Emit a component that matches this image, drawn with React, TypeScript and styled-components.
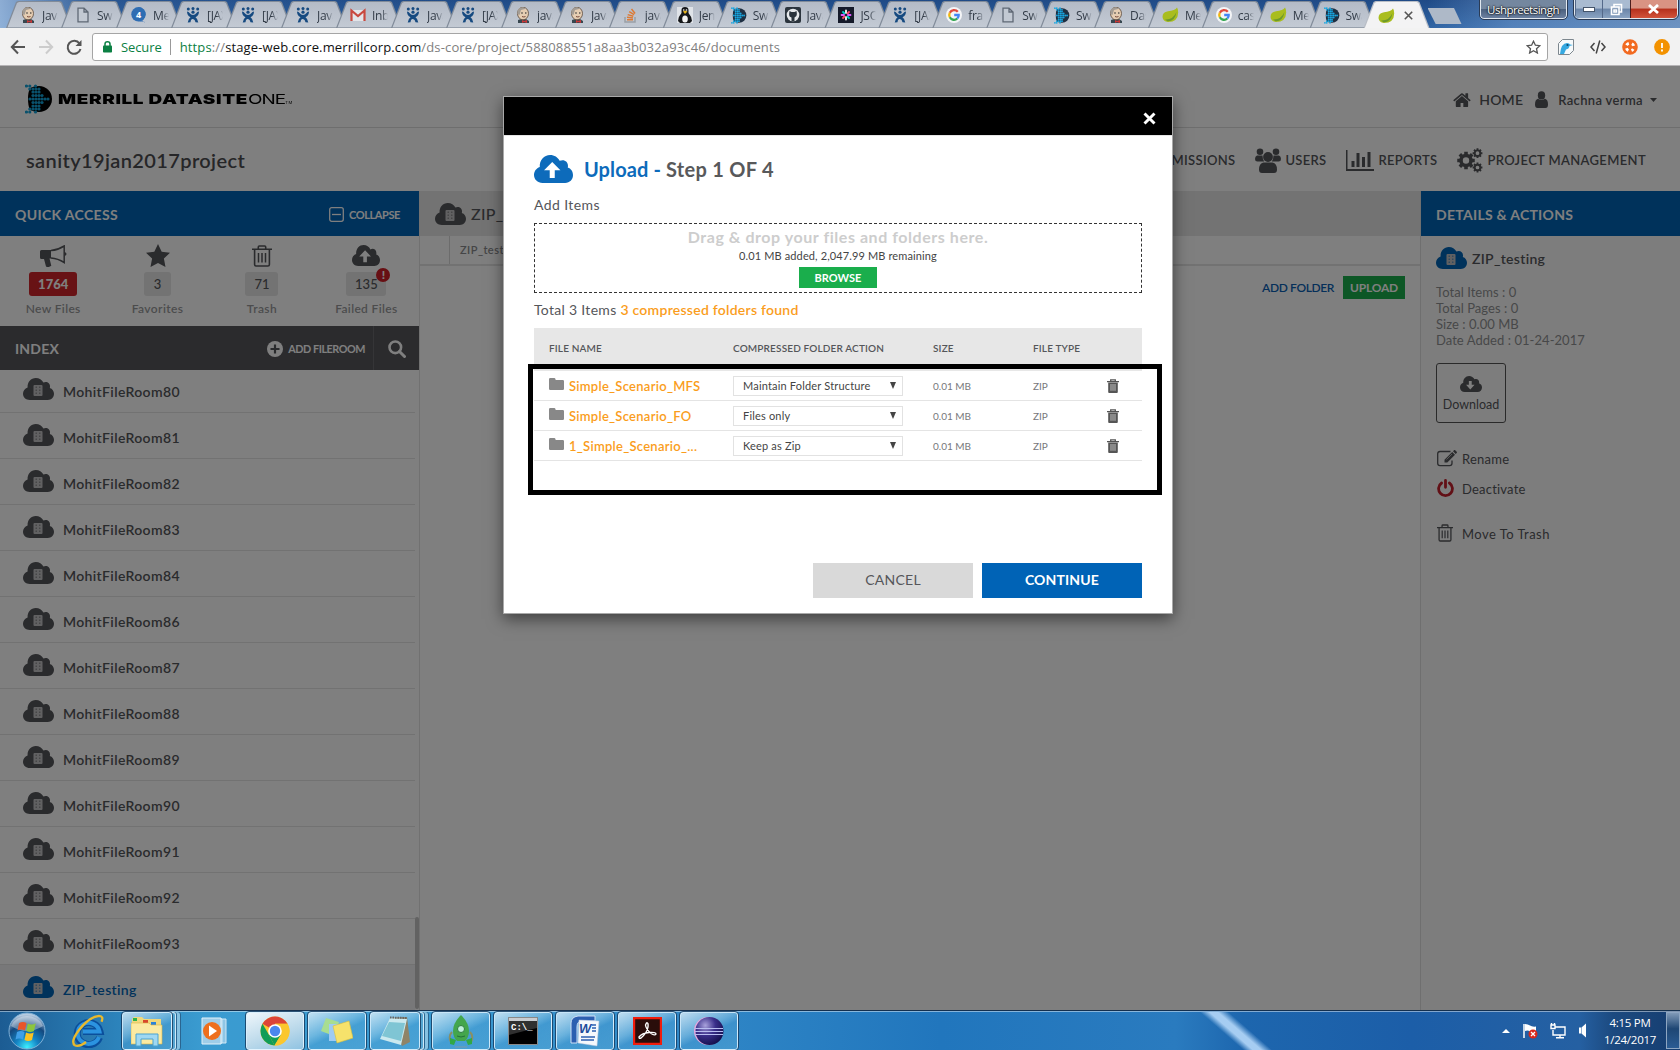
import React from "react";
import styled, { createGlobalStyle, css } from "styled-components";

const Global = createGlobalStyle`
  * { box-sizing: border-box; }
  html, body { margin: 0; padding: 0; overflow: hidden; background: #fff; }
  svg { display: block; flex: none; }
`;

const BRAND = `Lato, "Open Sans", sans-serif`;
const SYSTEM = `"Open Sans", "Noto Sans", sans-serif`;

type TypeProps = { $size?: number; $weight?: number; $color?: string; $track?: number };
const type = css<TypeProps>`
  font-size: ${(p) => p.$size ?? 14}px;
  font-weight: ${(p) => p.$weight ?? 400};
  color: ${(p) => p.$color ?? "#55565a"};
  letter-spacing: ${(p) => p.$track ?? 0}px;
  white-space: nowrap;
`;
const Label = styled.span<TypeProps>`
  ${type}
`;

const Screen = styled.div`
  width: 1680px;
  height: 1050px;
  display: flex;
  flex-direction: column;
  overflow: hidden;
  font-family: ${BRAND};
`;

/* ---------- browser chrome ---------- */

const TabStrip = styled.div`
  height: 28px;
  display: flex;
  padding: 1px 0 0 6px;
  background: linear-gradient(90deg, rgba(160, 190, 225, 0.85), rgba(60, 110, 170, 0.3) 6%, rgba(30, 75, 135, 0) 30%, rgba(20, 60, 120, 0) 85%, rgba(120, 160, 210, 0.5) 90%, rgba(170, 195, 225, 0.5)),
    linear-gradient(180deg, #1f4a86, #2f64a4);
`;
const TabShape = styled.div<{ $active?: boolean; $overlap?: number }>`
  width: 66px;
  height: 27px;
  margin-right: -${(p) => p.$overlap ?? 12}px;
  flex: none;
  clip-path: polygon(0 100%, 10px 1px, 12px 0, 54px 0, 56px 1px, 100% 100%);
  background: ${(p) => (p.$active ? "#b9bec6" : "#818b99")};
`;
const TabFace = styled.div<{ $active?: boolean }>`
  height: 27px;
  display: flex;
  align-items: center;
  padding: 2px 0 0 14px;
  clip-path: polygon(1.3px 100%, 11px 2px, 13px 1px, 53px 1px, 55px 2px, calc(100% - 1.3px) 100%);
  background: ${(p) => (p.$active ? "#f3f3f4" : "linear-gradient(180deg, #b3bac6, #c3cad4)")};
  border-bottom: ${(p) => (p.$active ? "none" : "1px solid #98a1ad")};
`;
const TabTitle = styled.span`
  width: 16px;
  margin-left: 6px;
  overflow: hidden;
  white-space: nowrap;
  font: 12px ${SYSTEM};
  letter-spacing: -0.3px;
  color: #333c48;
  -webkit-mask-image: linear-gradient(90deg, #000 60%, transparent);
  mask-image: linear-gradient(90deg, #000 60%, transparent);
`;
const NewTab = styled.div`
  width: 34px;
  height: 16px;
  margin: 7px 0 0 10px;
  flex: none;
  clip-path: polygon(0 0, 78% 0, 100% 100%, 24% 100%);
  background: #aeb9c8;
`;
const UserButton = styled.div`
  width: 87px;
  height: 19px;
  margin: -1px 0 0 18px;
  display: flex;
  align-items: center;
  justify-content: center;
  border: 1px solid #e1e8f0;
  outline: 1px solid #2a3b55;
  border-top: 0;
  border-radius: 0 0 4px 4px;
  background: linear-gradient(180deg, #74879f 0 48%, #4a5f7c 50%, #6b80a0);
  font: 11.5px ${SYSTEM};
  letter-spacing: -0.5px;
  color: #fff;
  text-shadow: 0 0 2px #000, 0 0 2px #000;
`;
const WindowButtons = styled.div`
  display: flex;
  height: 19px;
  margin: -1px 0 0 7px;
  border: 1px solid #e1e8f0;
  outline: 1px solid #2a3b55;
  border-top: 0;
  border-radius: 0 0 5px 5px;
  overflow: hidden;
`;
const WindowButton = styled.div<{ $close?: boolean }>`
  width: ${(p) => (p.$close ? 47 : 27.5)}px;
  display: flex;
  align-items: center;
  justify-content: center;
  border-left: 1px solid ${(p) => (p.$close ? "#4b1d1d" : "#54698a")};
  background: ${(p) => (p.$close ? "linear-gradient(180deg,#d99383 0 45%,#b5301c 50%,#d2533b)" : "linear-gradient(180deg,#a9bbd1 0 45%,#6b85a8 50%,#8aa3c2)")};
`;

const Toolbar = styled.div`
  height: 38px;
  display: flex;
  align-items: center;
  padding-left: 10px;
  background: #f2f2f2;
  border-bottom: 1px solid #b6b4b6;
`;
const Omnibox = styled.div`
  width: 1456px;
  height: 28px;
  margin: 0 0 0 10px;
  padding: 0 6px 0 10px;
  display: flex;
  align-items: center;
  background: #fff;
  border: 1px solid #a5a5a5;
  border-radius: 3px;
  font-family: ${SYSTEM};
`;
const OmniDivider = styled.i`
  width: 1px;
  height: 16px;
  margin: 0 8.5px;
  background: #999;
`;
const Url = styled.span`
  font-size: 13px;
  letter-spacing: 0.14px;
  color: #808080;
  flex: 1;
  white-space: nowrap;
  b { font-weight: 400; color: #111; }
  em { font-style: normal; color: #0b8043; }
`;
const Extensions = styled.div`
  display: flex;
  gap: 16px;
  margin-left: 10px;
`;

/* ---------- application ---------- */

const Page = styled.div`
  position: relative;
  height: 944px;
  display: flex;
  flex-direction: column;
  background: #fff;
`;
const BrandBar = styled.div`
  height: 62px;
  display: flex;
  align-items: center;
  padding: 4px 23px 0 25px;
  border-bottom: 1px solid #dcdcdc;
`;
const AccountLinks = styled.div`
  display: flex;
  align-items: center;
  padding-top: 2px;
`;
const Wordmark = styled.div`
  width: 236px;
  margin: 1px 0 0 5px;
  color: #000;
  font: 900 13.5px Inter, sans-serif;
  letter-spacing: 0.45px;
  white-space: nowrap;
  transform: scaleX(1.4);
  transform-origin: 0 50%;
  span { font-weight: 400; letter-spacing: -0.7px; }
  small { font-size: 3px; font-weight: 400; }
`;
const Spacer = styled.div`
  flex: 1;
`;
const ProjectBar = styled.div`
  height: 63px;
  display: flex;
  align-items: center;
  padding: 1px 34px 0 26px;
`;
const NavItem = styled.div<{ $gap: number }>`
  display: flex;
  align-items: center;
  gap: 4px;
  margin-left: ${(p) => p.$gap}px;
`;
const Columns = styled.div`
  flex: 1;
  display: flex;
  min-height: 0;
`;
const Sidebar = styled.aside`
  width: 420px;
  display: flex;
  flex-direction: column;
  border-right: 1px solid #e2e2e2;
`;
const PanelTitle = styled.div<{ $dark?: boolean }>`
  height: ${(p) => (p.$dark ? 44 : 45)}px;
  flex: none;
  display: flex;
  align-items: center;
  padding: ${(p) => (p.$dark ? 1 : 2)}px 0 0 15px;
  background: ${(p) => (p.$dark ? "#56565a" : "#0064b6")};
`;
const QuickRow = styled.div`
  height: 90px;
  flex: none;
  display: grid;
  grid-template-columns: repeat(4, 104.4px);
  padding-left: 1px;
`;
const QuickItem = styled.div`
  display: flex;
  flex-direction: column;
  align-items: center;
  padding-top: 8px;
`;
const QuickIcon = styled.div`
  height: 23px;
  display: flex;
  align-items: center;
`;
const CountBadge = styled.div<{ $alert?: boolean; $w: number }>`
  position: relative;
  width: ${(p) => p.$w}px;
  height: 24px;
  margin: 5px 0 5px;
  display: flex;
  align-items: center;
  justify-content: center;
  border-radius: 3px;
  background: ${(p) => (p.$alert ? "#d0242a" : "#e6e6e6")};
`;
const AlertDot = styled.div`
  position: absolute;
  right: -4px;
  top: -4px;
  width: 14px;
  height: 14px;
  border-radius: 50%;
  background: #cf1f27;
  color: #fff;
  font: 900 12px/14px ${BRAND};
  text-align: center;
`;
const SearchCell = styled.div`
  height: 44px;
  margin: -1px 0 0 8px;
  padding-top: 1px;
  width: 46px;
  display: flex;
  align-items: center;
  justify-content: center;
  border-left: 1px solid #6a6a6e;
`;
const RoomList = styled.div`
  position: relative;
  flex: 1;
  overflow: hidden;
`;
const Room = styled.div<{ $selected?: boolean }>`
  width: 415px;
  height: 46px;
  display: flex;
  align-items: flex-start;
  gap: 9px;
  padding: 11px 0 0 23px;
  border-bottom: 1px solid #e4e4e4;
  background: ${(p) => (p.$selected ? "#f1f1f2" : "#fff")};
  &:first-child { margin-top: -3px; }
`;
const RoomName = styled.span<TypeProps>`
  ${type}
  line-height: 18px;
  margin-top: 5px;
`;
const ScrollThumb = styled.div`
  position: absolute;
  right: 0;
  bottom: 1px;
  width: 4px;
  height: 92px;
  border-radius: 2px;
  background: #c4c4c4;
`;
const Main = styled.main`
  width: 1001px;
  display: flex;
  flex-direction: column;
  border-right: 1px solid #dedede;
`;
const MainTitle = styled.div`
  height: 45px;
  display: flex;
  align-items: center;
  gap: 5px;
  padding: 0 0 0 15px;
  background: #e6e6e6;
`;
const Crumbs = styled.div`
  height: 30px;
  display: flex;
  align-items: stretch;
  border-bottom: 2px solid #e4e4e4;
`;
const CrumbHome = styled.div`
  width: 30px;
  border-right: 1px solid #d8d8d8;
`;
const Crumb = styled.div<TypeProps>`
  ${type}
  padding-left: 10px;
  line-height: 28px;
`;
const MainActions = styled.div`
  display: flex;
  justify-content: flex-end;
  align-items: center;
  gap: 9px;
  padding: 10px 15px 0 0;
`;
const UploadButton = styled.div`
  width: 62px;
  height: 23px;
  display: flex;
  align-items: center;
  justify-content: center;
  background: #1aae4c;
`;
const Details = styled.aside`
  flex: 1;
  display: flex;
  flex-direction: column;
  background: #fbfbfb;
`;
const DetailsHead = styled.div`
  display: flex;
  align-items: center;
  gap: 5px;
  padding: 11px 0 0 15px;
`;
const Facts = styled.div<TypeProps>`
  ${type}
  padding: 15px 0 0 15px;
  line-height: 16px;
`;
const DownloadBox = styled.div`
  width: 70px;
  height: 60px;
  margin: 15px 0 0 15px;
  display: flex;
  flex-direction: column;
  align-items: center;
  padding-top: 12px;
  gap: 5px;
  border: 1px solid #555;
  border-radius: 3px;
`;
const ActionRow = styled.div<{ $top: number }>`
  height: 20px;
  margin-top: ${(p) => p.$top}px;
  padding-left: 16px;
  display: grid;
  grid-template-columns: 25px auto;
  align-items: center;
  svg { margin-bottom: 2px; }
`;

/* ---------- upload dialog ---------- */

const Backdrop = styled.div`
  position: absolute;
  inset: 0;
  background: rgba(0, 0, 0, 0.5);
`;
const Dialog = styled.div`
  position: absolute;
  left: 503px;
  top: 30px;
  width: 670px;
  height: 518px;
  display: flex;
  flex-direction: column;
  background: #fff;
  border: 1px solid #a9a9a9;
  box-shadow: 0 5px 15px rgba(0, 0, 0, 0.5);
`;
const DialogBar = styled.div`
  height: 39px;
  flex: none;
  display: flex;
  align-items: center;
  justify-content: flex-end;
  padding: 4px 16px 0 0;
  background: #000;
  border-bottom: 1px solid #e5e5e5;
`;
const DialogBody = styled.div`
  flex: 1;
  display: flex;
  flex-direction: column;
  padding: 17px 30px 15px;
`;
const DialogTitle = styled.div`
  height: 31px;
  display: flex;
  align-items: center;
  gap: 11px;
`;
const DropZone = styled.div`
  height: 70px;
  margin-top: -3px;
  display: flex;
  flex-direction: column;
  align-items: center;
  border: 1px dashed #333;
`;
const BrowseButton = styled.div`
  width: 78px;
  height: 21px;
  margin-top: 5px;
  display: flex;
  align-items: center;
  justify-content: center;
  background: #1aae4c;
`;
const Line = styled.div<TypeProps & { $h: number }>`
  ${type}
  height: ${(p) => p.$h}px;
  line-height: ${(p) => p.$h}px;
`;
const Totals = styled(Line)`
  line-height: 33px;
`;
const gridColumns = css`
  display: grid;
  grid-template-columns: 184px 200px 100px 74px 50px;
  padding-left: 15px;
`;
const TableHead = styled.div`
  ${gridColumns}
  height: 43px;
  line-height: 40px;
  background: #e7e7e7;
`;
const TableRow = styled.div`
  ${gridColumns}
  height: 30px;
  align-items: center;
  border-bottom: 1px solid #e4e4e4;
`;
const FileCell = styled.div`
  display: flex;
  align-items: center;
  gap: 5px;
  svg { margin-bottom: 4px; }
`;
const SelectBox = styled.div`
  width: 170px;
  height: 20px;
  display: flex;
  align-items: center;
  justify-content: space-between;
  padding: 0 6px 0 9px;
  border: 1px solid #e2e2e2;
`;
const Buttons = styled.div`
  display: flex;
  justify-content: flex-end;
  gap: 9px;
`;
const FooterButton = styled.div<{ $primary?: boolean }>`
  width: 160px;
  height: 35px;
  display: flex;
  align-items: center;
  justify-content: center;
  padding-bottom: 2px;
  background: ${(p) => (p.$primary ? "#0063b6" : "#d9d9d9")};
`;
const Highlight = styled.div`
  position: absolute;
  left: 24px;
  top: 267px;
  width: 634px;
  height: 131px;
  border: 5px solid #000;
`;

/* ---------- taskbar ---------- */

const Taskbar = styled.div`
  height: 40px;
  display: flex;
  align-items: stretch;
  border-top: 1px solid #14304f;
  box-shadow: inset 0 1px 0 rgba(255, 255, 255, 0.45);
  background: linear-gradient(90deg, #1c5c93 0, #2c83bb 7%, #3a9bd0 12%, #3a9bd2 25%, #2f86c6 42%, #2176bd 56%, #2a7bbf 70%, #1d66ae 74%, #1c5ea8 84%, #2560a2 94%, #1c4a80 96%, #163d70 100%);
`;
const StartCell = styled.div`
  width: 54px;
  display: flex;
  align-items: center;
  justify-content: center;
`;
const PinCell = styled.div<{ $w: number }>`
  width: ${(p) => p.$w}px;
  display: flex;
  align-items: center;
  justify-content: center;
`;
const TaskButton = styled.div<{ $w?: number; $active?: boolean; $stack?: boolean }>`
  width: ${(p) => p.$w ?? 58}px;
  height: 38px;
  margin: 1px ${(p) => (p.$stack ? 12 : 4)}px 0 0;
  display: flex;
  align-items: center;
  justify-content: center;
  border: 1px solid rgba(225, 243, 255, 0.85);
  border-radius: 3px;
  outline: 1px solid rgba(20, 55, 90, 0.8);
  background: ${(p) =>
    p.$active
      ? "linear-gradient(160deg, #eef6fb, #b9d8ea 60%, #8fc3e2)"
      : "linear-gradient(155deg, rgba(225,241,250,.8), rgba(150,205,235,.55) 40%, rgba(85,165,215,.4) 55%, rgba(90,170,215,.5))"};
  ${(p) =>
    p.$stack &&
    css`
      box-shadow: 4px 0 0 -1px #55a6d2, 4px 0 0 0 #cfe9f7, 5px 0 0 0 #2a6590, 8px 0 0 0 #86c2e2, 9px 0 0 0 #2a6590;
    `}
`;
const Streak = styled.div`
  width: 76px;
  margin: 1px 0 0 456px;
  background: linear-gradient(41deg, transparent 38%, #a6cdf2 46% 53%, transparent 62%);
`;
const Tray = styled.div`
  display: flex;
  align-items: center;
  gap: 12px;
`;
const Clock = styled.div`
  width: 62px;
  margin: 3px 5px 0 11px;
  text-align: center;
  font: 11.5px/17px ${SYSTEM};
  letter-spacing: -0.25px;
  color: #fff;
`;
const ShowDesktop = styled.div`
  width: 14px;
  margin: 1px 0 1px;
  border: 1px solid #8ea6c2;
  background: linear-gradient(180deg, #7f99b7, #1e4674 45%, #2b5c94);
`;

/* ---------- drawings ---------- */

const CLOUD =
  "M6.8 22C2.8 22 0 19.3 0 15.8 0 12.8 1.8 10.4 4.6 9.4 4.2 4 8 0 12.8 0c3.4 0 6.2 1.8 7.6 4.6C23.6 3 27.2 5 27 8.6c0 .5 0 .9-.2 1.3C29.4 10.7 31 13 31 15.8c0 3.6-2.6 6.2-6.2 6.2Z";

const RoomCloud = ({ color = "#55565a", w = 31, h = 22 }: { color?: string; w?: number; h?: number }) => (
  <svg width={w} height={h} viewBox="0 0 31 22" preserveAspectRatio="none">
    <path d={CLOUD} fill={color} />
    <rect x="10.5" y="7" width="9" height="11" rx="1" fill="#c3c3c5" />
    <path d="M13.2 8.6v8M16.800 8.600v8" stroke={color} strokeWidth="1.200" strokeDasharray="1.500 1.400" opacity=".6" />
  </svg>
);
const ArrowCloud = ({ color = "#55565a", w = 28, h = 21, down = false }: { color?: string; w?: number; h?: number; down?: boolean }) => (
  <svg width={w} height={h} viewBox="0 0 31 22" preserveAspectRatio="none">
    <path d={CLOUD} fill={color} />
    <path d={down ? "M12.500 7h4v5h4L14.500 18.500 8.500 12h4z" : "M14.500 5.500 21 12h-4.500v6h-4v-6H8z"} fill="#fff" />
  </svg>
);
const TrashOutline = ({ w = 20, h = 22, color = "#55565a" }: { w?: number; h?: number; color?: string }) => (
  <svg width={w} height={h} viewBox="0 0 20 22" fill="none" stroke={color} strokeWidth="1.600">
    <path d="M0 4.300h20M6.300 4V2q0-1 1-1h5.400q1 0 1 1v2M2.600 4.500v15q0 1.500 1.500 1.500h11.800q1.500 0 1.500-1.500v-15" />
    <path d="M6.500 8v9.500M10 8v9.500M13.500 8v9.500" strokeWidth="1.500" />
  </svg>
);
const TrashSmall = () => (
  <svg width="12" height="14" viewBox="0 0 12 14">
    <path d="M0 2.600h12M3.700 2.400V.8h4.600v1.600" fill="none" stroke="#555" strokeWidth="1.300" />
    <path d="M1.200 3.400h9.600V13q0 1-1 1H2.200q-1 0-1-1z" fill="#555" />
    <path d="M4 5v6.800M6 5v6.800M8 5v6.800" stroke="#ccc" strokeWidth=".9" />
  </svg>
);
const Folder = () => (
  <svg width="15" height="12" viewBox="0 0 15 12">
    <path d="M0 1.200Q0 0 1.200 0h4Q6.300 0 6.500 1.200L6.700 2h7.100Q15 2 15 3.200v7.600q0 1.200-1.200 1.200H1.200Q0 12 0 10.800z" fill="#888" />
  </svg>
);
const Home = () => (
  <svg width="18" height="18" viewBox="60 100 1680 1560">
    <path fill="#55565a" d="M1472 992v480q0 26-19 45t-45 19h-384v-384h-256v384h-384q-26 0-45-19t-19-45v-480q0-1 .5-3t.5-3l575-474 575 474q1 2 1 6zm223-69l-62 74q-8 9-21 11h-3q-13 0-21-7l-692-577-692 577q-12 8-24 7-13-2-21-11l-62-74q-8-10-7-23.500t11-21.500l719-599q32-26 76-26t76 26l244 204v-195q0-14 9-23t23-9h192q14 0 23 9t9 23v408l219 182q10 8 11 21.500t-7 23.500z" />
  </svg>
);
const Person = () => (
  <svg width="13" height="17" viewBox="0 0 13 17" fill="#55565a">
    <ellipse cx="6.500" cy="4.400" rx="3.700" ry="4.200" />
    <path d="M3 7.800q3.500 2.600 7 0 3 .8 3 5.700 0 3.500-2.600 3.500H2.600Q0 17 0 13.500q0-4.900 3-5.700z" />
  </svg>
);
const People = () => (
  <svg width="26" height="25" viewBox="0 0 26 25" fill="#55565a">
    <circle cx="5" cy="3.800" r="3.300" />
    <circle cx="21" cy="3.800" r="3.300" />
    <path d="M2 7.500h5.500q0 3.500 1.700 6H2.400Q0 13.500 0 11q0-3 2-3.500zM24 7.500h-5.500q0 3.500-1.700 6h6.800Q26 13.500 26 11q0-3-2-3.500z" />
    <circle cx="13" cy="9" r="4.900" />
    <path d="M8.500 14.500h9q4.500 1 4.500 7 0 3.500-3 3.500H7q-3 0-3-3.500 0-6 4.500-7z" />
  </svg>
);
const Bars = () => (
  <svg width="28" height="22" viewBox="0 0 28 22" fill="#55565a">
    <path d="M0 1h1.500v19H28v2H0zM5.500 12h3v6h-3zM10.500 4h3v14h-3zM16 8h3v10h-3zM21.500 3h3v15h-3z" />
  </svg>
);
const Gear = ({ cx, cy, r, w }: { cx: number; cy: number; r: number; w: number }) => (
  <g stroke="#55565a" fill="none">
    <circle cx={cx} cy={cy} r={r} strokeWidth={w} />
    {[0, 45, 90, 135].map((a) => (
      <path key={a} transform={`rotate(${a} ${cx} ${cy})`} d={`M${cx} ${cy - r * 1.75}V${cy - r}M${cx} ${cy + r}v${r * 0.75}`} strokeWidth={w} />
    ))}
  </g>
);
const Gears = () => (
  <svg width="26" height="25" viewBox="0 0 26 25">
    <Gear cx={9} cy={12.5} r={5} w={3.6} />
    <Gear cx={20.5} cy={5.2} r={2.8} w={1.9} />
    <Gear cx={20.5} cy={19.5} r={2.8} w={1.9} />
  </svg>
);
const Megaphone = () => (
  <svg width="27" height="22" viewBox="0 0 27 22">
    <path d="M0 6.500Q0 5 1.500 5H11v8.500H9.500l1.800 7.300Q8 23 6 21.500L4 14H1.500Q0 14 0 12.500z" fill="#55565a" />
    <path d="M11 5.600Q18 5 24.200 1v16.500Q18 13.500 11 13" fill="none" stroke="#55565a" strokeWidth="1.500" />
    <path d="M24.500 7q2 .3 2 2t-2 2z" fill="#55565a" />
  </svg>
);
const Star = () => (
  <svg width="24" height="24" viewBox="0 0 24 24">
    <path d="M12 0l3.700 7.700 8.300 1.100-6.100 5.800 1.600 8.400-7.500-4.100L4.500 23l1.600-8.400L0 8.800l8.300-1.100z" fill="#55565a" />
  </svg>
);
const Collapse = () => (
  <svg width="15" height="15" viewBox="0 0 15 15" fill="none" stroke="#fff" strokeWidth="1.300">
    <rect x=".7" y=".7" width="13.600" height="13.600" rx="2" />
    <path d="M3 7.500h9" />
  </svg>
);
const PlusCircle = () => (
  <svg width="16" height="16" viewBox="0 0 16 16">
    <circle cx="8" cy="8" r="8" fill="#fff" />
    <path d="M8 3.500v9M3.500 8h9" stroke="#55565a" strokeWidth="2.200" />
  </svg>
);
const Search = () => (
  <svg width="18" height="18" viewBox="0 0 18 18" fill="none" stroke="#fff">
    <circle cx="7.300" cy="7.300" r="5.800" strokeWidth="2.600" />
    <path d="M11.500 11.500l5 5" strokeWidth="3" strokeLinecap="round" />
  </svg>
);
const Pencil = () => (
  <svg width="20" height="17" viewBox="0 0 20 17">
    <path d="M13.500 1.500H3Q.7 1.500.7 3.800v9.500q0 2.300 2.300 2.300h9.700q2.300 0 2.300-2.300v-2.800" fill="none" stroke="#55565a" strokeWidth="1.300" />
    <path d="M7.500 9.700L15.200 2l2.800 2.800-7.700 7.700H7.500zM16 1.200l1-1q.6-.5 1.200 0l1.500 1.500q.6.600 0 1.200l-1 1z" fill="#55565a" />
    <path d="M9.500 9.500l5.500-5.500" stroke="#ddd" strokeWidth=".7" />
  </svg>
);
const Power = () => (
  <svg width="17" height="18" viewBox="0 0 17 18" fill="none" stroke="#c4202c" strokeWidth="2.800" strokeLinecap="round">
    <path d="M4.600 4a6.900 6.900 0 1 0 7.800 0M8.500 1.500v6.800" />
  </svg>
);
const Caret = () => (
  <svg width="7" height="4" viewBox="0 0 7 4">
    <path d="M0 0h7L3.500 4z" fill="#55565a" />
  </svg>
);

const MerrillMark = ({ w = 28, h = 30, body = "#000", dot = "#12a2d8" }: { w?: number; h?: number; body?: string; dot?: string }) => (
  <svg width={w} height={h} viewBox="0 0 28 30">
    <path d="M5 4Q9 2 14 2a13 13 0 0 1 0 26q-5 0-9-2-2-4-2-11T5 4z" fill={body} />
    <g fill={dot}>
      {[
        [1.5, 2], [4.8, 2], [10.5, 2], [4.8, 5], [8, 5], [11, 5], [14, 5], [8, 8], [11, 8], [14, 8],
        [8, 11.5], [11, 11.5], [14, 11.5], [17, 11.5], [5, 15], [8, 15], [11, 15], [14, 15], [17, 15], [20, 15], [23, 15],
        [8, 18.5], [11, 18.5], [14, 18.5], [17, 18.5], [8, 22], [11, 22], [14, 22], [4.8, 25], [8, 25], [11, 25], [14, 25],
        [1.5, 28], [4.8, 28], [10.5, 28],
      ].map(([x, y]) => (
        <circle key={`${x}-${y}`} cx={x} cy={y} r="1.600" />
      ))}
    </g>
  </svg>
);

const Leaf = () => (
  <svg width="17" height="16" viewBox="0 0 17 16">
    <path d="M15 .5q1 1 1.200 5Q16 15 6 15q-5-.3-5.500-5Q.5 5 6 4.200 13 3.800 15 .5z" fill="#a9bd1e" />
    <path d="M3 12.500Q11 13 14.500 5 13 14.500 5.500 14.300z" fill="#6d9a2b" />
  </svg>
);
const Jenkins = () => (
  <svg width="16" height="16" viewBox="0 0 16 16">
    <path d="M3 16v-3l3-1h5l3 2v2z" fill="#37474f" />
    <ellipse cx="8" cy="6.500" rx="5.500" ry="6.300" fill="#e5cdb2" stroke="#5c4a3c" strokeWidth=".8" />
    <path d="M2.500 7Q1.500 1 7 .3q3 0 4 1.500L6 3 4.500 8z" fill="#a39c94" />
    <circle cx="7" cy="6" r=".8" fill="#333" />
    <circle cx="10.800" cy="6" r=".8" fill="#333" />
    <path d="M7 9.500q2 1 3.500 0" stroke="#7a4a3a" fill="none" />
    <path d="M7 13l2 1 3-1v3l-3-1-2 1z" fill="#c93838" />
  </svg>
);
const Jira = () => (
  <svg width="16" height="16" viewBox="0 0 16 16" fill="#164a80">
    <circle cx="3.300" cy="1.900" r="1.500" />
    <circle cx="8" cy="1.500" r="1.500" />
    <circle cx="12.700" cy="1.900" r="1.500" />
    <path d="M2 4.500q2 0 2.500 1.500Q6 8 8 8t3.500-2Q12 4.500 14 4.500q0 4-3.500 5.800Q13 12 13.300 15.500l-2.800-.3Q10 12.500 8 12t-2.500 3.200l-2.800.3Q3 12 5.500 10.300 2 8.500 2 4.500z" />
    <circle cx="8" cy="5.200" r="1.600" />
  </svg>
);
const Doc = () => (
  <svg width="16" height="16" viewBox="0 0 16 16" fill="#c2c9d3" stroke="#5f6875" strokeWidth="1.300">
    <path d="M3 1.200h6L13 5v9.800H3zM9 1.200V5h4" />
  </svg>
);
const Bubble = () => (
  <svg width="17" height="16" viewBox="0 0 17 16">
    <path d="M8.500 0a7.500 7.200 0 1 1-1 14.400h6.500l1 1.600-3-3z" fill="#2e6db3" />
    <circle cx="8.500" cy="7.300" r="7.200" fill="#2e6db3" />
    <text x="8.500" y="10.500" fontSize="9" fontWeight="700" fill="#fff" textAnchor="middle" fontFamily="Open Sans">4</text>
  </svg>
);
const Gmail = () => (
  <svg width="16" height="16" viewBox="0 0 16 16">
    <path d="M1 3h14v11H1z" fill="#e3e5e9" />
    <path d="M1.500 14V3.500L8 9l6.500-5.500V14" fill="none" stroke="#c9493f" strokeWidth="2.200" />
  </svg>
);
const Stack = () => (
  <svg width="16" height="16" viewBox="0 0 16 16" fill="none" strokeWidth="1.500">
    <path d="M2 10v5h10v-5" stroke="#9aa0a6" />
    <path d="M4 12.800h6M4 10.300l6 .6M4.700 7.600l5.600 1.600M6.200 4.600l4.900 3M8.500 2l3.600 4.500" stroke="#dc7a35" />
  </svg>
);
const Tux = () => (
  <svg width="16" height="16" viewBox="0 0 16 16">
    <path d="M0 0h16v16H0z" fill="#dfe3e8" />
    <path d="M4.500 3q0-3 3.500-3t3.500 3v3q3.500 4 3.500 8l-2 2H3l-2-2q0-4 3.500-8z" fill="#15171a" />
    <ellipse cx="8" cy="12" rx="2.800" ry="3.500" fill="#f2f2f2" />
    <path d="M6 4.500l2-1 2.500 1L8 7z" fill="#e2b21f" />
    <circle cx="6.700" cy="3" r=".8" fill="#fff" />
    <circle cx="9.500" cy="3" r=".8" fill="#fff" />
  </svg>
);
const GitHub = () => (
  <svg width="16" height="16" viewBox="0 0 16 16">
    <rect width="16" height="16" rx="2" fill="#2b343d" />
    <circle cx="8" cy="8" r="6.300" fill="#e6e9ec" />
    <path d="M4.500 4l2 1h3l2-1 .4 3q0 3-2.400 3.500V14h-3v-3.500Q4 10 4.100 7z" fill="#2b343d" />
  </svg>
);
const JsonMark = () => (
  <svg width="16" height="16" viewBox="0 0 16 16" strokeWidth="1.800" strokeLinecap="round">
    <path d="M0 0h16v16H0z" fill="#151a2a" />
    <path d="M8 3.500v2.500M8 10v2.500" stroke="#fff" />
    <path d="M5 5l1.500 1.500M9.500 9.500L11 11" stroke="#00d4c8" />
    <path d="M11 5L9.500 6.500M6.500 9.500L5 11" stroke="#ff4a6a" />
    <path d="M3.500 8H6M10 8h2.500" stroke="#e05aff" />
  </svg>
);
const Google = ({ s = 16 }: { s?: number }) => (
  <svg width={s} height={s} viewBox="0 0 16 16" fill="none" strokeWidth="2.300">
    <circle cx="8" cy="8" r="8" fill="#f4f5f7" />
    <path d="M11.800 4.800A4.800 4.800 0 0 0 3.800 5.800" stroke="#e04a3f" />
    <path d="M3.800 5.800a4.800 4.800 0 0 0 0 4.500" stroke="#f2b60f" />
    <path d="M3.800 10.300a4.800 4.800 0 0 0 7.500 1.200" stroke="#36a853" />
    <path d="M11.300 11.500Q12.800 10 12.700 8H8.200" stroke="#4285f4" />
  </svg>
);
const Mark16 = () => <MerrillMark w={16} h={17} body="#1e2f42" dot="#19a6e0" />;

const tabs: [React.FC, string][] = [
  [Jenkins, "Java"], [Doc, "Swa"], [Bubble, "Mer"], [Jira, "[JAX"], [Jira, "[JAX"], [Jira, "Java"], [Gmail, "Inbo"],
  [Jira, "Java"], [Jira, "[JAX"], [Jenkins, "java"], [Jenkins, "Java"], [Stack, "java"], [Tux, "Jen"], [Mark16, "Swa"],
  [GitHub, "Java"], [JsonMark, "JSO"], [Jira, "[JAX"], [Google, "fran"], [Doc, "Swa"], [Mark16, "Swa"], [Jenkins, "Das"],
  [Leaf, "Mer"], [Google, "cass"], [Leaf, "Mer"], [Mark16, "Swa"],
];

const rooms = ["80", "81", "82", "83", "84", "86", "87", "88", "89", "90", "91", "92", "93"];

const files = [
  ["Simple_Scenario_MFS", "Maintain Folder Structure"],
  ["Simple_Scenario_FO", "Files only"],
  ["1_Simple_Scenario_...", "Keep as Zip"],
];

/* ---------- taskbar drawings ---------- */

const StartOrb = () => (
  <svg width="38" height="38" viewBox="0 0 38 38">
    <defs>
      <radialGradient id="orb" cx=".5" cy=".95" r=".9">
        <stop offset="0" stopColor="#3df0ff" />
        <stop offset=".35" stopColor="#1483c4" />
        <stop offset=".7" stopColor="#14487e" />
        <stop offset="1" stopColor="#b7cbe0" />
      </radialGradient>
    </defs>
    <circle cx="19" cy="19" r="18" fill="url(#orb)" stroke="#7fb0d6" />
    <path d="M3 14a17 15 0 0 1 32 0q-8 5-16 5T3 14z" fill="#fff" opacity=".35" />
    <path d="M11 11q4-2 7.500 0l-1.500 7.500q-4-2-7.500 0z" fill="#e8562a" />
    <path d="M19.800 11.500q4 2 8-.3L26 19q-4 2-7.700 0z" fill="#8cc63e" />
    <path d="M9 20q4-2 7.500 0L15 27.500q-4-2-7.500 0z" fill="#3f9fe8" />
    <path d="M18 20.500q4 2 7.700 0L24 28q-4 2-7.500 0z" fill="#fcc322" />
  </svg>
);
const Explorer = () => (
  <svg width="32" height="32" viewBox="0 0 32 32">
    <path d="M1 4l2-2h8l2 2h17v8H1z" fill="#f1d87c" />
    <path d="M2 3h4v3H2z" fill="#2db34a" />
    <path d="M12 5h5v3h-5z" fill="#d9472b" />
    <path d="M20 7h5v3h-5z" fill="#2b82d9" />
    <path d="M0 8h18l2 2h11v19H0z" fill="#fbeaa2" stroke="#d9b64a" strokeWidth=".6" />
    <path d="M5 31V19h22v12h-5v-7H10v7z" fill="#9fd8f2" stroke="#4ba3d0" />
  </svg>
);
const InternetExplorer = () => (
  <svg width="34" height="34" viewBox="0 0 34 34" fill="none">
    <path d="M28.500 23.500A11.500 11 0 1 1 29 17.500H12" stroke="#0b4f9c" strokeWidth="7" />
    <path d="M28 23A11 10.500 0 1 1 28.500 17.500H12" stroke="#2b93e0" strokeWidth="4" />
    <path d="M4 31.500Q-1 28 8 16 18 3 28 1.800q5 .2 2.500 6" stroke="#e9b92c" strokeWidth="2.300" />
    <path d="M4 31.500q5 1.500 11-3.500" stroke="#e9b92c" strokeWidth="2.300" />
  </svg>
);
const MediaPlayer = () => (
  <svg width="28" height="28" viewBox="0 0 28 28">
    <path d="M8 2h17v24H8z" fill="#8fc6e6" stroke="#cfe8f6" />
    <path d="M4 2h17v24H4z" fill="#8fc6e6" stroke="#cfe8f6" />
    <path d="M1 1h19v26H1z" fill="#9fcde8" stroke="#e2f2fa" />
    <circle cx="11" cy="14" r="9" fill="#ee6f1d" />
    <path d="M8 8.500v11l8-5.500z" fill="#fff" />
  </svg>
);
const Chrome = () => (
  <svg width="30" height="30" viewBox="0 0 30 30">
    <circle cx="15" cy="15" r="14.500" fill="#fbc72e" />
    <path d="M15 15L2.500 7.700A14.500 14.500 0 0 1 27.500 7.700H15z" fill="#dc4437" />
    <path d="M2.500 7.700L9 19l5.500 10.500A14.500 14.500 0 0 1 2.500 7.700z" fill="#109d58" />
    <path d="M9 19l6-4 6 4-6.500 10.500z" fill="#109d58" />
    <path d="M21 18.500L14.500 29.500A14.500 14.500 0 0 0 27.500 7.700H15z" fill="#fbc72e" />
    <circle cx="15" cy="15" r="6.800" fill="#fff" />
    <circle cx="15" cy="15" r="5.200" fill="#4b87ee" />
  </svg>
);
const StickyNotes = () => (
  <svg width="32" height="28" viewBox="0 0 32 28">
    <path d="M5 1l13 4-5 14-13-5z" fill="#a8dd91" />
    <path d="M8 7h14v17H8z" fill="#9ecbf3" />
    <path d="M12 9l16-5 4 17-16 5z" fill="#f6e26b" stroke="#d8bf3c" strokeWidth=".6" />
  </svg>
);
const Notepad = () => (
  <svg width="32" height="32" viewBox="0 0 32 32">
    <path d="M11 3l17-1 3 25-8 4z" fill="#8f8468" />
    <path d="M11 3l17 1-6 26-21-6z" fill="#cbe9ef" />
    <path d="M10 7l16 1-4 18-19-5z" fill="#7fc5d4" />
    <path d="M11 2.500l17 .5" stroke="#666" strokeWidth="2" strokeDasharray="1.500 1" />
  </svg>
);
const Rocket = () => (
  <svg width="26" height="34" viewBox="0 0 26 34">
    <path d="M4 18q-4 4-1 10M22 18q4 4 1 10" fill="none" stroke="#8a8f62" strokeWidth="2" />
    <path d="M13 1q8 8 8 16 0 6-4 10H9q-4-4-4-10 0-8 8-16z" fill="#43a64c" />
    <circle cx="13" cy="15" r="3.500" fill="#bff0dc" stroke="#2c7c3c" />
    <path d="M2 24l6 2-2 5-4-1zM24 24l-6 2 2 5 4-1z" fill="#31a845" />
    <path d="M9 22q4 2 8 0" stroke="#23703a" fill="none" />
    <path d="M7 33h12" stroke="#7d9aa8" />
  </svg>
);
const Terminal = () => (
  <svg width="30" height="28" viewBox="0 0 30 28">
    <path d="M.5.5h29v27H.5z" fill="#000" stroke="#888" />
    <path d="M1 1h28v3H1z" fill="#c9ccd0" />
    <path d="M1 4h28v7Q15 14 1 18z" fill="#444" opacity=".7" />
    <text x="3" y="13" fontSize="9" fontWeight="700" fill="#fff" fontFamily="Liberation Mono">C:\_</text>
  </svg>
);
const Word = () => (
  <svg width="30" height="32" viewBox="0 0 30 32">
    <path d="M1 28V8q0-6 7-7h17v5H12q-5 0-5 6v16z" fill="#2c5fb0" stroke="#cfe0f5" />
    <path d="M9 5l20 1-2 25-19-3z" fill="#f5f8fc" stroke="#b5c3da" strokeWidth=".5" />
    <text x="9" y="18" fontSize="13" fontWeight="900" fontStyle="italic" fill="#1f4d9c" fontFamily="Liberation Sans">W</text>
    <path d="M22 10h4M22 13h4M22 16h4M11 22h14M11 25h13" stroke="#2c5fb0" strokeWidth="1.500" />
  </svg>
);
const Acrobat = () => (
  <svg width="29" height="28" viewBox="0 0 29 28">
    <path d="M1 1h27v26H1z" fill="#2a0d0a" stroke="#f01c0c" strokeWidth="2.400" />
    <path d="M13.500 6q2-1 1.500 4-1 6-7 11-2 1-2-1 3-4 10-4.500 7-.5 7 1.500-1 2-5-.5Q13 12 12.500 8z" fill="none" stroke="#fff" strokeWidth="1.400" />
  </svg>
);
const Eclipse = () => (
  <svg width="30" height="30" viewBox="0 0 30 30">
    <defs>
      <radialGradient id="ecl" cx=".35" cy=".3" r=".8">
        <stop offset="0" stopColor="#a9a2dc" />
        <stop offset=".45" stopColor="#3a2f8a" />
        <stop offset="1" stopColor="#0f0a44" />
      </radialGradient>
    </defs>
    <circle cx="14" cy="15" r="14" fill="#e6a8dc" />
    <circle cx="15.500" cy="15" r="14" fill="url(#ecl)" />
    <path d="M1 12.500h28M1 15.500h28M1 18.500h28" stroke="#b9bdf0" strokeWidth="1.100" />
  </svg>
);

/* ---------- page ---------- */

const BrowserChrome = () => (
  <>
    <TabStrip>
      {tabs.map(([Icon, title], i) => (
        <TabShape key={i} $overlap={i < 9 ? 11 : 12.1}>
          <TabFace>
            <Icon />
            <TabTitle>{title}</TabTitle>
          </TabFace>
        </TabShape>
      ))}
      <TabShape $active>
        <TabFace $active>
          <Leaf />
          <svg width="9" height="9" viewBox="0 0 9 9" style={{ marginLeft: 9 }}>
            <path d="M.8.8l7.400 7.400M8.200.8L.8 8.200" stroke="#555" strokeWidth="1.600" />
          </svg>
        </TabFace>
      </TabShape>
      <NewTab />
      <UserButton>Ushpreetsingh</UserButton>
      <WindowButtons>
        <WindowButton>
          <svg width="12" height="5"><rect x=".5" y=".5" width="11" height="4" fill="#fff" stroke="#45556b" /></svg>
        </WindowButton>
        <WindowButton>
          <svg width="13" height="13" viewBox="0 0 13 13" fill="none" stroke="#fff" strokeWidth="1.600">
            <path d="M4 4V1.500h7.500V9H9M1.500 4H9v7.500H1.500zM4 7h2.500v2H4z" />
          </svg>
        </WindowButton>
        <WindowButton $close>
          <svg width="11" height="10" viewBox="0 0 11 10">
            <path d="M1 1l9 8M10 1L1 9" stroke="#fff" strokeWidth="2.800" />
          </svg>
        </WindowButton>
      </WindowButtons>
    </TabStrip>
    <Toolbar>
      <svg width="72" height="18" viewBox="0 0 72 18" fill="none" strokeWidth="2">
        <path d="M15 9H2M8 2.500L1.800 9 8 15.500" stroke="#555" />
        <path d="M29 9h13M36 2.500L42.200 9 36 15.500" stroke="#ccc" />
        <path d="M69.500 5.500A6.500 6.500 0 1 0 70.500 11" stroke="#555" />
        <path d="M71.500 2v6h-6z" fill="#555" />
      </svg>
      <Omnibox>
        <svg width="9" height="12" viewBox="0 0 9 12">
          <rect y="4.500" width="9" height="7" rx=".8" fill="#0b8043" />
          <path d="M2 5V3a2.500 2.200 0 0 1 5 0v2" fill="none" stroke="#0b8043" strokeWidth="1.500" />
        </svg>
        <Label $size={13} $color="#0b8043" $track={-0.1} style={{ marginLeft: 9 }}>Secure</Label>
        <OmniDivider />
        <Url>
          <em>https</em>://<b>stage-web.core.merrillcorp.com</b>/ds-core/project/588088551a8aa3b032a93c46/documents
        </Url>
        <svg width="15" height="14" viewBox="0 0 15 14">
          <path d="M7.500 1.200l1.900 4 4.400.5-3.300 3 .9 4.300-3.900-2.200L3.600 13l.9-4.300-3.300-3 4.400-.5z" fill="none" stroke="#555" strokeWidth="1.300" />
        </svg>
      </Omnibox>
      <Extensions>
        <svg width="16" height="16" viewBox="0 0 16 16">
          <path d="M4.500.5h11v11l-4 4H.5v-11z" fill="#f7fafb" stroke="#7d878e" />
          <path d="M2 15Q3 4 9 4q2.500 0 3 1.500L15 6l-3.500 1Q11 10 8 10.500L6 15z" fill="#36a9e1" />
          <circle cx="9.500" cy="6" r="1.100" fill="#0b4870" />
        </svg>
        <svg width="16" height="16" viewBox="0 0 16 16" fill="none" stroke="#444" strokeWidth="1.500">
          <path d="M4.500 4L1 8l3.500 4M11.500 4L15 8l-3.500 4M9.800 1.500L6.200 14.500" />
        </svg>
        <svg width="16" height="16" viewBox="0 0 16 16">
          <circle cx="8" cy="8" r="7.800" fill="#f26a21" />
          <circle cx="8" cy="8" r="3.800" fill="none" stroke="#fff" strokeWidth="2.800" strokeDasharray="3 2.970" strokeDashoffset="1.500" transform="rotate(45 8 8)" />
        </svg>
        <svg width="16" height="16" viewBox="0 0 16 16">
          <circle cx="8" cy="8" r="7.900" fill="#f39200" />
          <path d="M8 4v5M8 10.500v2" stroke="#fff" strokeWidth="1.800" />
        </svg>
      </Extensions>
    </Toolbar>
  </>
);

const SidebarPanel = () => (
  <Sidebar>
    <PanelTitle>
      <Label $size={14} $weight={700} $color="#fff" $track={0.35}>QUICK ACCESS</Label>
      <Spacer />
      <Collapse />
      <Label $size={11} $weight={700} $color="#fff" $track={-0.4} style={{ margin: "0 19px 0 5px" }}>COLLAPSE</Label>
    </PanelTitle>
    <QuickRow>
      <QuickItem>
        <QuickIcon><Megaphone /></QuickIcon>
        <CountBadge $w={48} $alert><Label $size={13} $weight={900} $color="#fff">1764</Label></CountBadge>
        <Label $size={12} $weight={600} $color="#98999b" $track={0.35}>New Files</Label>
      </QuickItem>
      <QuickItem>
        <QuickIcon><Star /></QuickIcon>
        <CountBadge $w={27}><Label $size={13} $weight={500}>3</Label></CountBadge>
        <Label $size={12} $weight={600} $color="#98999b" $track={0.4}>Favorites</Label>
      </QuickItem>
      <QuickItem>
        <QuickIcon><TrashOutline /></QuickIcon>
        <CountBadge $w={33}><Label $size={13} $weight={500}>71</Label></CountBadge>
        <Label $size={12} $weight={600} $color="#98999b" $track={0.4}>Trash</Label>
      </QuickItem>
      <QuickItem>
        <QuickIcon><ArrowCloud /></QuickIcon>
        <CountBadge $w={40}>
          <Label $size={13} $weight={500}>135</Label>
          <AlertDot>!</AlertDot>
        </CountBadge>
        <Label $size={12} $weight={600} $color="#98999b" $track={0.35}>Failed Files</Label>
      </QuickItem>
    </QuickRow>
    <PanelTitle $dark>
      <Label $size={14} $weight={700} $color="#fff" $track={0.2}>INDEX</Label>
      <Spacer />
      <PlusCircle />
      <Label $size={10.8} $weight={700} $color="#fff" $track={-0.45} style={{ marginLeft: 5 }}>ADD FILEROOM</Label>
      <SearchCell><Search /></SearchCell>
    </PanelTitle>
    <RoomList>
      {rooms.map((n) => (
        <Room key={n}>
          <RoomCloud />
          <RoomName $size={14} $weight={600} $track={0.35}>MohitFileRoom{n}</RoomName>
        </Room>
      ))}
      <Room $selected>
        <RoomCloud color="#0064b6" />
        <RoomName $size={14} $weight={600} $color="#0064b6" $track={0.35}>ZIP_testing</RoomName>
      </Room>
      <ScrollThumb />
    </RoomList>
  </Sidebar>
);

const UploadDialog = () => (
  <Dialog>
    <DialogBar>
      <svg width="13" height="13" viewBox="0 0 13 13">
        <path d="M1.500 1.500l10 10M11.500 1.500l-10 10" stroke="#fff" strokeWidth="2.900" />
      </svg>
    </DialogBar>
    <DialogBody>
      <DialogTitle>
        <ArrowCloud color="#0d6bbb" w={39} h={28} />
        <Label $size={20} $weight={700} $color="#0d6bbb" $track={0.1}>
          Upload - <Label $size={20} $weight={700} $color="#58595b" $track={0.3}>Step 1 OF 4</Label>
        </Label>
      </DialogTitle>
      <Line $h={42} $size={14} $track={0.4}>Add Items</Line>
      <DropZone>
        <Line $h={26} $size={16} $weight={700} $color="#cdcdcd" $track={0.55}>Drag &amp; drop your files and folders here.</Line>
        <Line $h={12} $size={11} $color="#444" $track={0.12}>0.01 MB added, 2,047.99 MB remaining</Line>
        <BrowseButton><Label $size={11} $weight={700} $color="#fff">BROWSE</Label></BrowseButton>
      </DropZone>
      <Totals $h={35} $size={14} $track={0.3}>
        Total 3 Items <Label $size={14} $weight={600} $color="#fa9d1c" $track={0.25}>3 compressed folders found</Label>
      </Totals>
      <TableHead>
        <Label $size={10} $weight={600} $track={0.15}>FILE NAME</Label>
        <Label $size={10} $weight={600} $track={0.15}>COMPRESSED FOLDER ACTION</Label>
        <Label $size={10} $weight={600} $track={0.15}>SIZE</Label>
        <Label $size={10} $weight={600} $track={0.15}>FILE TYPE</Label>
      </TableHead>
      {files.map(([name, action]) => (
        <TableRow key={name}>
          <FileCell>
            <Folder />
            <Label $size={13} $weight={600} $color="#fa9d1c" $track={0.27}>{name}</Label>
          </FileCell>
          <SelectBox>
            <Label $size={11} $color="#444" $track={0.18}>{action}</Label>
            <svg width="6" height="7" viewBox="0 0 6 7"><path d="M0 0h6L3 7z" fill="#444" /></svg>
          </SelectBox>
          <Label $size={10} $color="#77787b">0.01 MB</Label>
          <Label $size={10} $color="#77787b">ZIP</Label>
          <TrashSmall />
        </TableRow>
      ))}
      <Spacer />
      <Buttons>
        <FooterButton><Label $size={14} $track={0.25}>CANCEL</Label></FooterButton>
        <FooterButton $primary><Label $size={14} $weight={700} $color="#fff" $track={0.15}>CONTINUE</Label></FooterButton>
      </Buttons>
    </DialogBody>
    <Highlight />
  </Dialog>
);

const DesktopTaskbar = () => (
  <Taskbar>
    <StartCell><StartOrb /></StartCell>
    <PinCell $w={68}><InternetExplorer /></PinCell>
    <TaskButton $w={50} $stack><Explorer /></TaskButton>
    <PinCell $w={62}><MediaPlayer /></PinCell>
    <TaskButton $active><Chrome /></TaskButton>
    <TaskButton><StickyNotes /></TaskButton>
    <TaskButton $w={50} $stack><Notepad /></TaskButton>
    <TaskButton><Rocket /></TaskButton>
    <TaskButton><Terminal /></TaskButton>
    <TaskButton><Word /></TaskButton>
    <TaskButton><Acrobat /></TaskButton>
    <TaskButton><Eclipse /></TaskButton>
    <Streak />
    <Spacer />
    <Tray>
      <svg width="8" height="4" viewBox="0 0 8 4"><path d="M0 4h8L4 0z" fill="#fff" /></svg>
      <svg width="16" height="16" viewBox="0 0 16 16">
        <path d="M2 1v14" stroke="#fff" strokeWidth="1.500" />
        <path d="M3 1q3 0 5 1.500t6 1V9q-4 1-6-.5T3 8z" fill="#fff" />
        <circle cx="11" cy="11" r="4.500" fill="#d8281c" />
        <path d="M9 9l4 4M13 9l-4 4" stroke="#fff" strokeWidth="1.300" />
      </svg>
      <svg width="16" height="16" viewBox="0 0 16 16" fill="none" stroke="#fff" strokeWidth="1.400">
        <path d="M5 4h10v8H3V7M10 12v2.500M6 14.800h8M1 2h4v3.500H1zM1.500 0v2M4.500 0v2" />
      </svg>
      <svg width="10" height="15" viewBox="0 0 10 15"><path d="M1 4.500h2v6H1zM3.500 4.500L8 .5v14l-4.500-4z" fill="#fff" /></svg>
    </Tray>
    <Clock>
      4:15 PM
      <br />
      1/24/2017
    </Clock>
    <ShowDesktop />
  </Taskbar>
);

export default function App() {
  return (
    <Screen>
      <Global />
      <BrowserChrome />
      <Page>
        <BrandBar>
          <MerrillMark />
          <Wordmark>MERRILL DATASITE<span>ONE</span><small>TM</small></Wordmark>
          <Spacer />
          <AccountLinks>
            <Home />
            <Label $size={14} $weight={600} $track={0.2} style={{ margin: "0 12px 0 8px" }}>HOME</Label>
            <Person />
            <Label $size={13} $weight={600} $track={0.35} style={{ margin: "0 7px 0 10px" }}>Rachna verma</Label>
            <Caret />
          </AccountLinks>
        </BrandBar>
        <ProjectBar>
          <Label $size={20} $weight={600} $color="#4d4d50" $track={0.38}>sanity19jan2017project</Label>
          <Spacer />
          <NavItem $gap={0}><Label $size={13} $weight={600} $track={0.3}>PERMISSIONS</Label></NavItem>
          <NavItem $gap={20}><People /><Label $size={13} $weight={600} $track={0.3}>USERS</Label></NavItem>
          <NavItem $gap={20}><Bars /><Label $size={13} $weight={600} $track={0.3}>REPORTS</Label></NavItem>
          <NavItem $gap={20}><Gears /><Label $size={13} $weight={600} $track={0.35}>PROJECT MANAGEMENT</Label></NavItem>
        </ProjectBar>
        <Columns>
          <SidebarPanel />
          <Main>
            <MainTitle>
              <RoomCloud />
              <Label $size={16} $weight={500} $track={0.3}>ZIP_testing</Label>
            </MainTitle>
            <Crumbs>
              <CrumbHome />
              <Crumb $size={11} $weight={600} $color="#8a8b8e" $track={0.45}>ZIP_testing</Crumb>
            </Crumbs>
            <MainActions>
              <Label $size={12} $weight={600} $color="#0a5fb4" $track={-0.38}>ADD FOLDER</Label>
              <UploadButton><Label $size={12} $weight={700} $color="#fff" $track={-0.2}>UPLOAD</Label></UploadButton>
            </MainActions>
          </Main>
          <Details>
            <PanelTitle><Label $size={14} $weight={700} $color="#fff" $track={0.28}>DETAILS &amp; ACTIONS</Label></PanelTitle>
            <DetailsHead>
              <RoomCloud color="#0064b6" />
              <Label $size={14} $weight={600} $track={0.3}>ZIP_testing</Label>
            </DetailsHead>
            <Facts $size={13} $color="#8f9092" $track={0.05}>
              Total Items : 0<br />
              Total Pages : 0<br />
              Size : 0.00 MB<br />
              Date Added : 01-24-2017
            </Facts>
            <DownloadBox>
              <ArrowCloud w={22} h={16} down />
              <Label $size={12.5}>Download</Label>
            </DownloadBox>
            <ActionRow $top={26}><Pencil /><Label $size={13} $track={0.25}>Rename</Label></ActionRow>
            <ActionRow $top={10}><Power /><Label $size={13} $track={0.2}>Deactivate</Label></ActionRow>
            <ActionRow $top={25}><TrashOutline w={16} h={18} /><Label $size={13} $track={0.45}>Move To Trash</Label></ActionRow>
          </Details>
        </Columns>
        <Backdrop />
        <UploadDialog />
      </Page>
      <DesktopTaskbar />
    </Screen>
  );
}
